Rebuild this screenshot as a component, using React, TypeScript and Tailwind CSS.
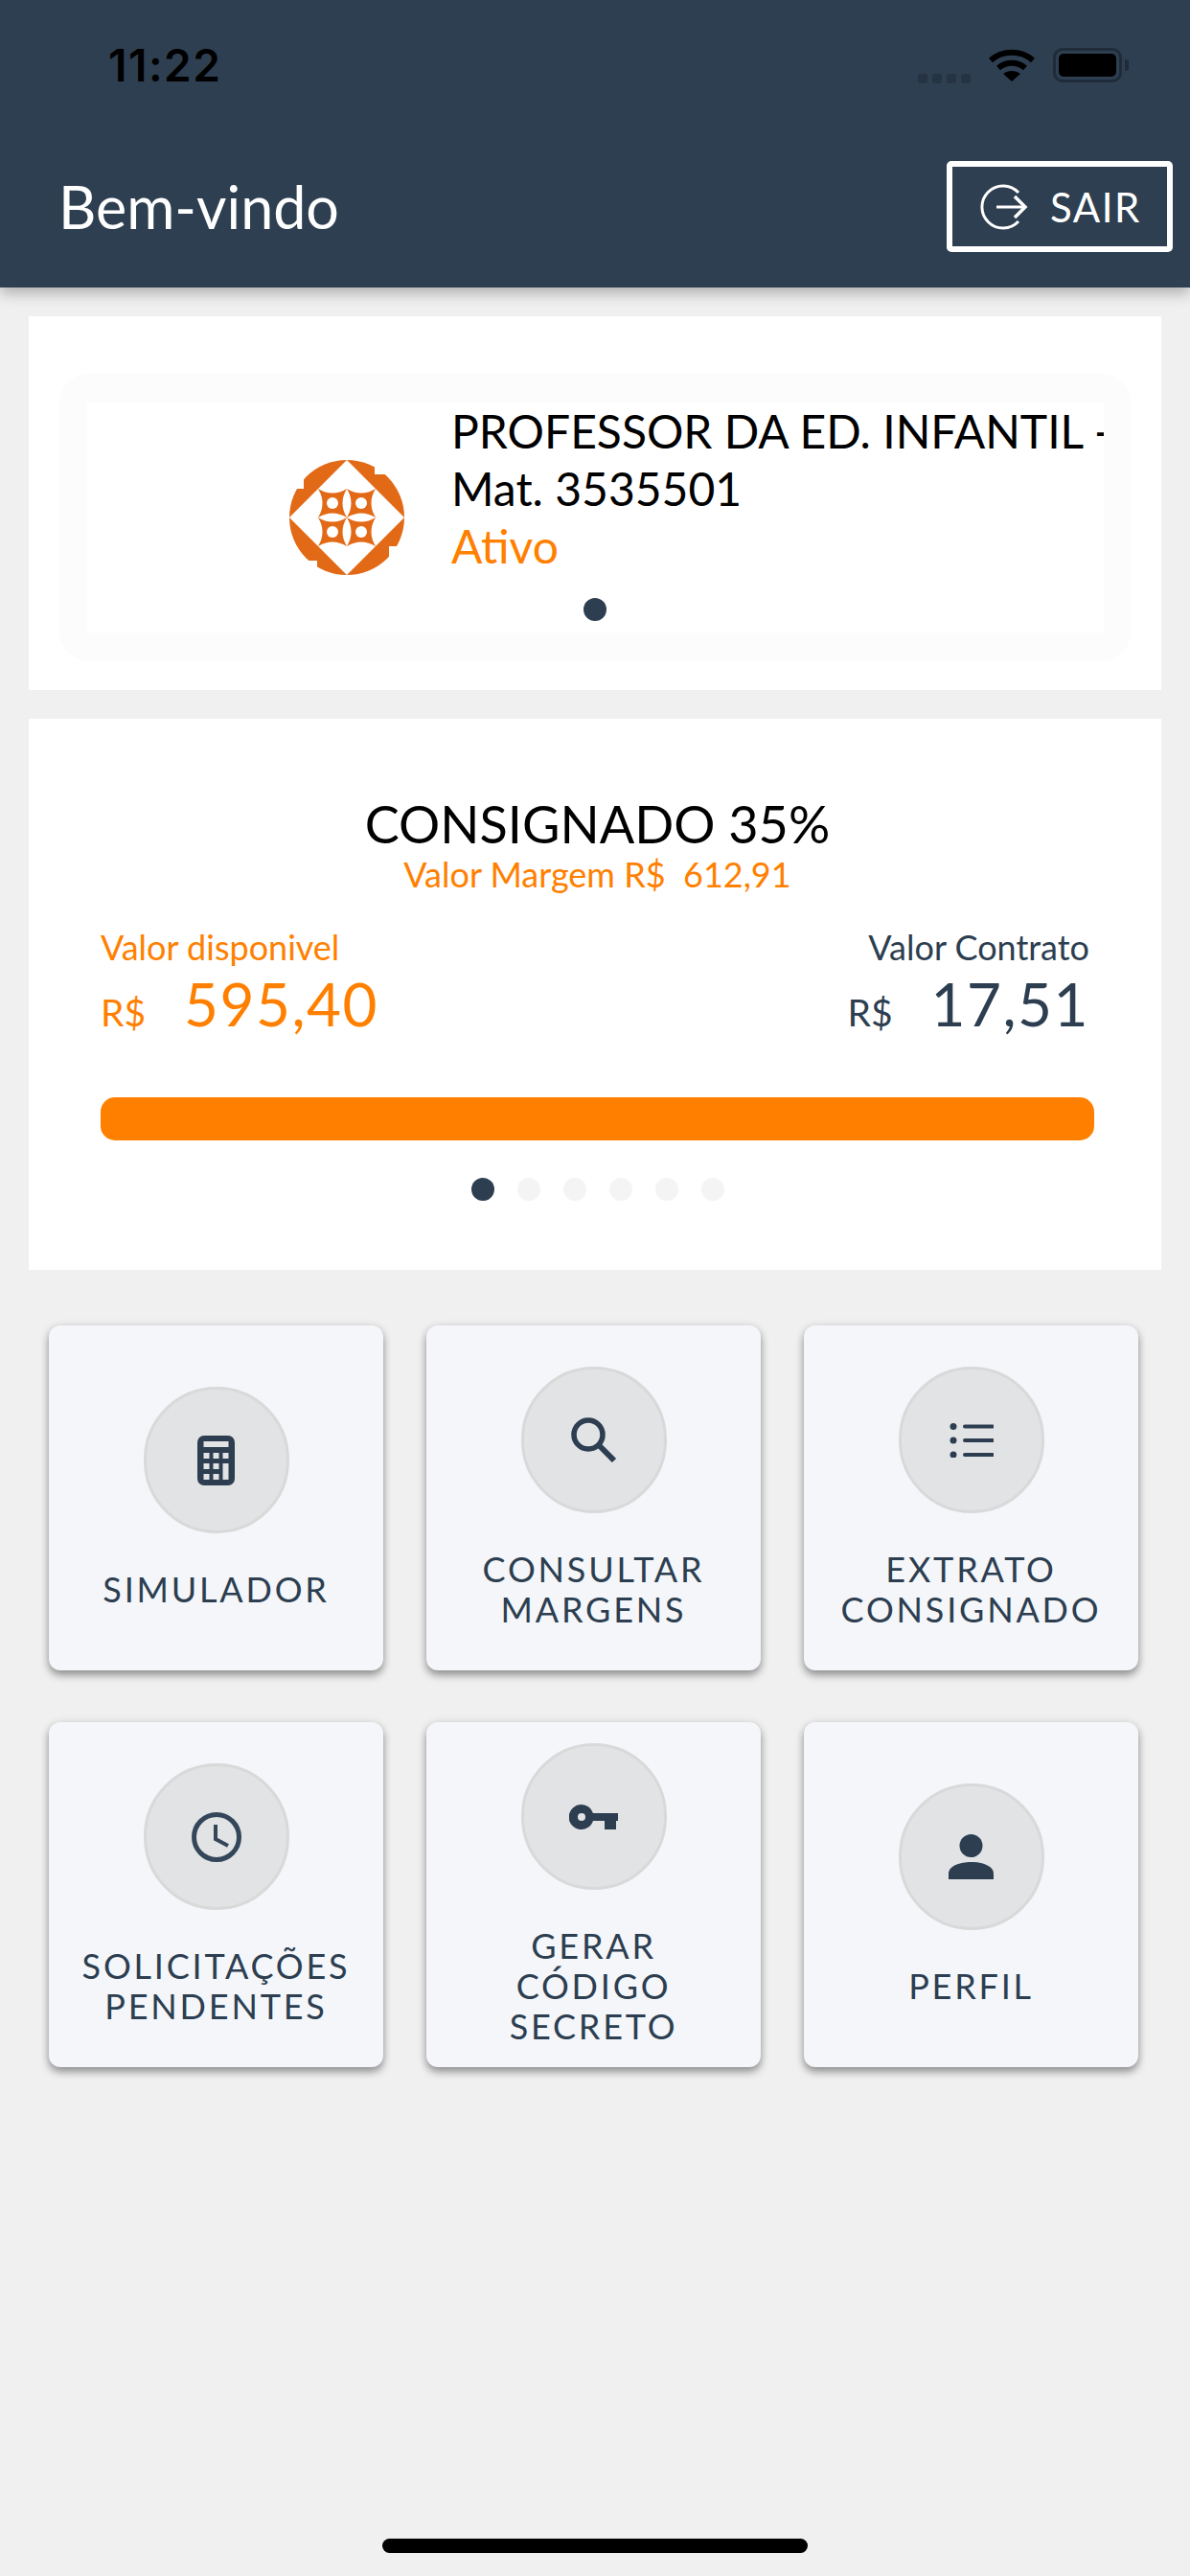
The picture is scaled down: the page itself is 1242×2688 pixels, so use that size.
import type { ReactNode } from 'react'

const CalculatorIcon = () => (
  <svg width="39" height="52" viewBox="0 0 39 52">
    <rect width="39" height="52" rx="7" fill="#2c3e50" />
    <rect x="6.5" y="6" width="26" height="6" fill="#e2e3e5" />
    {[18, 29, 40].map((y) =>
      [6.5, 16.5, 26.5].map((x) =>
        x === 26.5 && y > 18 ? null : <rect key={`${x}-${y}`} x={x} y={y} width="6" height="6" fill="#e2e3e5" />
      )
    )}
    <rect x="26.5" y="29" width="6" height="17" fill="#e2e3e5" />
  </svg>
)

const SearchIcon = () => (
  <svg width="48" height="48" viewBox="0 0 48 48" fill="none" stroke="#2c3e50">
    <circle cx="18" cy="18" r="15" strokeWidth="5.5" />
    <path d="M29 29 L45 45" strokeWidth="6" />
  </svg>
)

const ListIcon = () => (
  <svg width="46" height="36" viewBox="0 0 46 36" fill="#2c3e50">
    <circle cx="4" cy="3.5" r="3.5" />
    <circle cx="4" cy="18" r="3.5" />
    <circle cx="4" cy="33" r="3.5" />
    <rect x="14" y="1.5" width="33" height="4" rx="2" />
    <rect x="14" y="16" width="33" height="4" rx="2" />
    <rect x="14" y="31" width="33" height="4" rx="2" />
  </svg>
)

const ClockIcon = () => (
  <svg width="52" height="52" viewBox="0 0 52 52" fill="none" stroke="#34475a">
    <circle cx="26" cy="26" r="23.5" strokeWidth="5" />
    <path d="M25 13 V28 L38 35" strokeWidth="4" />
  </svg>
)

const KeyIcon = () => (
  <svg width="51" height="26" viewBox="0 0 51 26" fill="#2c3e50">
    <path fillRule="evenodd" d="M13 0 A13 13 0 0 1 25 9 H51 V17 H49 V26 H37 V17 H25 A13 13 0 1 1 13 0 Z M13 9 A4 4 0 1 0 13 17 A4 4 0 1 0 13 9 Z" />
  </svg>
)

const PersonIcon = () => (
  <svg width="47" height="47" viewBox="0 0 47 47" fill="#2c3e50">
    <circle cx="23.5" cy="12" r="12" />
    <path d="M0 47 V41 C0 33 12 29 23.5 29 C35 29 47 33 47 41 V47 Z" />
  </svg>
)

const LogoutIcon = () => (
  <svg width="50" height="48" viewBox="0 0 50 48" fill="none" stroke="white" strokeWidth="3">
    <path d="M40 9 A22 22 0 1 0 40 39" />
    <path d="M17 24 H46" />
    <path d="M36 13 L47 24 L36 35" strokeWidth="3.5" />
  </svg>
)

const WifiIcon = () => (
  <svg width="48" height="36" viewBox="0 0 48 36" fill="none" stroke="black" strokeWidth="6">
    <path d="M2 13 C14 2 34 2 46 13" />
    <path d="M10 21 C18 14 30 14 38 21" />
    <path d="M24 35 L15 27 C20 23 28 23 33 27 Z" fill="black" stroke="none" />
  </svg>
)

const Logo = () => (
  <svg width="120" height="120" viewBox="0 0 120 120" className="shrink-0 self-center">
    <circle cx="60" cy="60" r="60" fill="#e26a17" />
    <rect x="89" y="0" width="20" height="15" fill="white" />
    <rect x="0" y="20" width="15" height="10" fill="white" />
    <rect x="16" y="105" width="13" height="15" fill="white" />
    <rect x="104" y="90" width="16" height="12" fill="white" />
    <path d="M60 0 L120 60 L60 120 L0 60 Z" fill="white" />
    {[
      [30, 30],
      [60, 30],
      [30, 60],
      [60, 60],
    ].map(([x, y]) => (
      <g key={`${x}-${y}`} transform={`translate(${x} ${y})`}>
        <path d="M0 0 Q15 9 30 0 Q21 15 30 30 Q15 21 0 30 Q9 15 0 0 Z" fill="#e26a17" />
        <circle cx="15" cy="15" r="6" fill="white" />
      </g>
    ))}
  </svg>
)

const menu: { label: string[]; icon: ReactNode }[] = [
  { label: ['SIMULADOR'], icon: <CalculatorIcon /> },
  { label: ['CONSULTAR', 'MARGENS'], icon: <SearchIcon /> },
  { label: ['EXTRATO', 'CONSIGNADO'], icon: <ListIcon /> },
  { label: ['SOLICITAÇÕES', 'PENDENTES'], icon: <ClockIcon /> },
  { label: ['GERAR', 'CÓDIGO', 'SECRETO'], icon: <KeyIcon /> },
  { label: ['PERFIL'], icon: <PersonIcon /> },
]

export default function App() {
  return (
    <div className="min-h-[2688px] flex flex-col bg-[#f0f0f0] font-['Lato',sans-serif]">
      {/* Header */}
      <header className="relative z-10 h-[300px] bg-[#2e3f51] shadow-[0_6px_14px_rgba(0,0,0,0.28)]">
        <div className="h-[136px] flex items-center justify-between pl-[113px] pr-[64px]">
          <span className="font-['Inter',sans-serif] font-semibold text-[46px] tracking-[1.5px] text-black">11:22</span>
          <div className="flex items-center">
            <div className="flex gap-[5px] self-end mb-[-1px] mr-[19px]">
              <span className="w-[10px] h-[10px] rounded-[3px] bg-[#253342]" />
              <span className="w-[10px] h-[10px] rounded-[3px] bg-[#253342]" />
              <span className="w-[10px] h-[10px] rounded-[3px] bg-[#253342]" />
              <span className="w-[10px] h-[10px] rounded-[3px] bg-[#253342]" />
            </div>
            <WifiIcon />
            <div className="ml-[19px] w-[72px] h-[36px] rounded-[10px] border-[3px] border-[#1f2b38] p-[3px]">
              <div className="w-full h-full rounded-[5px] bg-black" />
            </div>
            <div className="ml-[3px] w-[4px] h-[12px] rounded-r-[3px] bg-[#1f2b38]" />
          </div>
        </div>
        <div className="mt-[32px] flex items-center justify-between pl-[61px] pr-[18px]">
          <span className="text-[61px] leading-[70px] text-white">Bem-vindo</span>
          <div className="w-[236px] h-[95px] flex items-center pl-[29px] gap-[23px] rounded-[5px] border-[6px] border-white">
            <LogoutIcon />
            <span className="text-[42px] leading-none tracking-[1.5px] text-white">SAIR</span>
          </div>
        </div>
      </header>

      <main className="flex-1 px-[30px] pt-[30px]">
        {/* Matricula */}
        <section className="bg-white pt-[60px] pb-[30px] px-[32px]">
          <div className="rounded-[30px] bg-[#fcfcfc] py-[30px] px-[28px]">
            <div className="relative h-[240px] bg-white flex gap-[49px] pl-[212px] overflow-hidden">
              <Logo />
              <div className="text-[48px] leading-[60px] whitespace-nowrap">
                <p className="text-black">PROFESSOR DA ED. INFANTIL -</p>
                <p className="text-black">Mat. 3535501</p>
                <p className="text-[#ff8000]">Ativo</p>
              </div>
              <span className="absolute left-[519px] bottom-[12px] w-[24px] h-[24px] rounded-full bg-[#2c3e50]" />
            </div>
          </div>
        </section>

        {/* Margem */}
        <section className="mt-[30px] h-[575px] bg-white pt-[80px] pl-[75px] pr-[70px]">
          <h2 className="text-center text-[54px] leading-[60px] text-black">CONSIGNADO 35%</h2>
          <p className="text-center text-[36px] leading-[44px] text-[#ff8000] whitespace-pre">Valor Margem R$  612,91</p>
          <div className="mt-[32px] flex justify-between pr-[5px]">
            <div className="text-[#ff8000]">
              <p className="text-[36px] leading-[44px]">Valor disponivel</p>
              <p className="flex items-baseline gap-[40px] leading-[72px] mt-[1px]">
                <span className="text-[39px]">R$</span>
                <span className="text-[62px] tracking-[1.5px]">595,40</span>
              </p>
            </div>
            <div className="text-[#2c3e50] flex flex-col items-end">
              <p className="text-[36px] leading-[44px]">Valor Contrato</p>
              <p className="flex items-baseline gap-[40px] leading-[72px] mt-[1px]">
                <span className="text-[39px]">R$</span>
                <span className="text-[62px] tracking-[1.5px]">17,51</span>
              </p>
            </div>
          </div>
          <div className="mt-[53px] h-[45px] rounded-[15px] bg-[#ff8000]" />
          <div className="mt-[39px] flex justify-center gap-[24px]">
            <span className="w-[24px] h-[24px] rounded-full bg-[#2c3e50]" />
            <span className="w-[24px] h-[24px] rounded-full bg-[#f4f4f4]" />
            <span className="w-[24px] h-[24px] rounded-full bg-[#f4f4f4]" />
            <span className="w-[24px] h-[24px] rounded-full bg-[#f4f4f4]" />
            <span className="w-[24px] h-[24px] rounded-full bg-[#f4f4f4]" />
            <span className="w-[24px] h-[24px] rounded-full bg-[#f4f4f4]" />
          </div>
        </section>

        {/* Menu */}
        <section className="mt-[58px] pl-[21px] pr-[24px] grid grid-cols-3 gap-x-[45px] gap-y-[54px]">
          {menu.map((item) => (
            <div
              key={item.label[0]}
              className="h-[360px] flex flex-col items-center justify-center rounded-[12px] bg-[#f4f6fa] shadow-[0_5px_8px_rgba(0,0,0,0.38),0_0_10px_rgba(0,0,0,0.08)]"
            >
              <div className="w-[152px] h-[153px] flex items-center justify-center rounded-full bg-[#e2e3e5] border-[3px] border-[#d8d9d9]">
                {item.icon}
              </div>
              <div className="mt-[37px] text-center text-[36px] leading-[42px] tracking-[2.8px] text-[#2c3e50]">
                {item.label.map((line) => (
                  <p key={line}>{line}</p>
                ))}
              </div>
            </div>
          ))}
        </section>
      </main>

      <div className="h-[63px] flex justify-center pt-[24px]">
        <div className="w-[444px] h-[15px] rounded-full bg-black" />
      </div>
    </div>
  )
}
